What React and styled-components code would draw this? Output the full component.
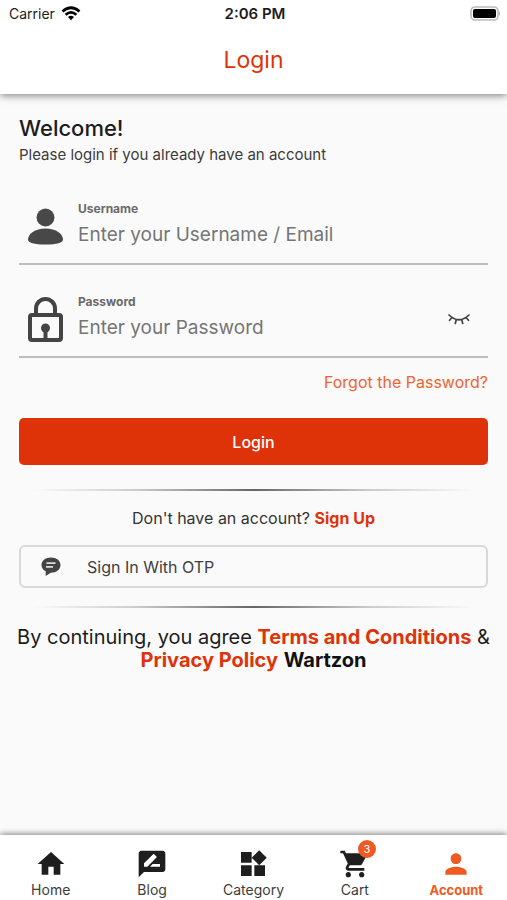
import React, { useState } from "react";
import styled, { createGlobalStyle } from "styled-components";
import {
  MdHome,
  MdRateReview,
  MdWidgets,
  MdShoppingCart,
  MdPerson,
} from "react-icons/md";

const GlobalStyle = createGlobalStyle`
  * {
    margin: 0;
    padding: 0;
    box-sizing: border-box;
  }

  body {
    background-color: #fafafa;
    color: #1c1c1c;
    font-family: Inter, sans-serif;
    font-size: 16px;
  }

  button, input {
    font-family: inherit;
  }
`;

const Page = styled.div`
  min-height: 100vh;
  display: flex;
  flex-direction: column;
`;

const Header = styled.header`
  background: #fff;
  box-shadow: 0 1px 8px rgba(0, 0, 0, 0.55);
`;

const StatusBar = styled.div`
  display: grid;
  grid-template-columns: 1fr auto 1fr;
  align-items: center;
  height: 27px;
  padding: 0 6px 0 9px;
`;

const Carrier = styled.div`
  display: flex;
  align-items: center;
  gap: 6px;
  font-size: 14px;
`;

const Clock = styled.time`
  font-size: 15px;
  font-weight: 600;
`;

const BatteryIcon = styled.svg`
  justify-self: end;
`;

const Title = styled.h1`
  height: 67px;
  line-height: 66px;
  text-align: center;
  font-size: 23px;
  font-weight: 400;
  color: #dd3409;
`;

const Main = styled.main`
  flex: 1;
  padding: 20px 19px;
`;

const Welcome = styled.h2`
  font-size: 22px;
  font-weight: 500;
  line-height: 28px;
`;

const Subtitle = styled.p`
  margin-top: 3px;
  font-size: 15px;
  line-height: 20px;
  color: #3c3c3c;
`;

const LoginForm = styled.form`
  display: flex;
  flex-direction: column;
  margin-top: 36px;
`;

const Field = styled.div`
  display: flex;
  align-items: center;
  gap: 14px;
  padding: 0 18px 12px 8px;
  margin-bottom: ${(props) => (props.$last ? "12px" : "29px")};
  border-bottom: 2px solid #bdbdbd;
`;

const FieldBody = styled.div`
  flex: 1;
  min-width: 0;
`;

const FieldLabel = styled.label`
  display: block;
  font-size: 12px;
  font-weight: 700;
  line-height: 16px;
  color: #696969;
`;

const FieldInput = styled.input`
  display: block;
  width: 100%;
  height: 34px;
  border: none;
  outline: none;
  background: transparent;
  font-size: 19px;
  color: #333;

  &::placeholder {
    color: #757575;
    opacity: 1;
  }
`;

const EyeButton = styled.button`
  display: flex;
  border: none;
  background: none;
  cursor: pointer;
`;

const ForgotLink = styled.a`
  align-self: flex-end;
  font-size: 16px;
  line-height: 24px;
  color: #f0622f;
  text-decoration: none;
`;

const LoginButton = styled.button`
  height: 47px;
  margin-top: 24px;
  border: none;
  border-radius: 5px;
  background: #de3208;
  color: #fff;
  font-size: 16px;
  font-weight: 500;
  cursor: pointer;
`;

const Divider = styled.hr`
  height: 2px;
  margin: ${(props) => (props.$top ? "24px 0 15px" : "18px 0")};
  border: none;
  background: linear-gradient(90deg, transparent 3%, #ccc 25%, #666 50%, #ccc 75%, transparent 97%);
`;

const SignUpText = styled.p`
  text-align: center;
  font-size: 16px;
  line-height: 24px;
  color: #333;
`;

const StrongLink = styled.a`
  color: #dd3409;
  font-weight: 700;
  text-decoration: none;
`;

const OtpButton = styled.button`
  display: flex;
  align-items: center;
  gap: 26px;
  width: 100%;
  height: 43px;
  margin-top: 15px;
  padding: 0 20px;
  border: 2px solid #d8d8d8;
  border-radius: 6px;
  background: transparent;
  color: #404040;
  font-size: 16px;
  cursor: pointer;
`;

const Terms = styled.p`
  margin: 0 -8px;
  text-align: center;
  font-size: 20px;
  line-height: 23px;

  b {
    color: #111;
    font-weight: 700;
  }
`;

const NavBar = styled.nav`
  display: grid;
  grid-template-columns: repeat(5, 1fr);
  height: 65px;
  background: #fff;
  box-shadow: 0 -1px 6px rgba(0, 0, 0, 0.5);
`;

const NavItem = styled.a`
  display: flex;
  flex-direction: column;
  align-items: center;
  padding-top: 13px;
  font-size: ${(props) => (props.$active ? "13px" : "14px")};
  line-height: 20px;
  font-weight: ${(props) => (props.$active ? 700 : 400)};
  color: ${(props) => (props.$active ? "#ee5a22" : "#3c3c3c")};
  text-decoration: none;
`;

const NavIcon = styled.span`
  position: relative;
  display: flex;
  height: 32px;
  font-size: 32px;
  color: ${(props) => (props.$active ? "#ee5a22" : "#1e1e1e")};
`;

const Badge = styled.span`
  position: absolute;
  top: -8px;
  right: -5px;
  width: 18px;
  height: 18px;
  border-radius: 50%;
  background: #ee5a22;
  color: #fff;
  font-size: 11px;
  line-height: 18px;
  text-align: center;
`;

const WifiIcon = () => (
  <svg width="20" height="15" viewBox="0 0 20 15" fill="none" stroke="#000" strokeWidth="2.7">
    <path d="M1.5 5.5Q10-2 18.5 5.5" />
    <path d="M4.6 8.8Q10 4.1 15.4 8.8" />
    <path d="M7 11Q10 8.6 13 11L10 14.2Z" fill="#000" stroke="none" />
  </svg>
);

const UserIcon = () => (
  <svg width="37" height="37" viewBox="0 0 37 37" fill="#484848">
    <circle cx="18.5" cy="9.5" r="9" />
    <path d="M1 31.5C1 26 8 20.5 18.5 20.5S36 26 36 31.5C36 35 30 36.5 18.5 36.5S1 35 1 31.5Z" />
  </svg>
);

const LockIcon = () => (
  <svg width="37" height="46" viewBox="0 0 37 46" fill="none" stroke="#444" strokeWidth="4">
    <path d="M9 18V12.5a9.5 9.5 0 0 1 19 0V18" />
    <rect x="3" y="19" width="31" height="25" rx="2" />
    <circle cx="18.5" cy="32" r="4.5" fill="#444" stroke="none" />
    <path d="M18.5 32V43" />
  </svg>
);

const ClosedEyeIcon = () => (
  <svg width="22" height="13" viewBox="0 0 22 13" fill="none" stroke="#444" strokeWidth="1.7" strokeLinecap="round">
    <path d="M1 2Q11 11.5 21 2M4 4.5L1.5 7.3M8.3 6.5L7.3 10.5M13.7 6.5L14.7 10.5M18 4.5L20.5 7.3" />
  </svg>
);

const MessageIcon = () => (
  <svg width="20" height="20" viewBox="0 0 20 20">
    <path d="M10 .5C4.500 .5 .5 3.500 .5 8c0 3 1.700 5 4.200 6.200V19l5-3.300C15.500 15.700 19.500 12.500 19.500 8S15.500 .5 10 .5Z" fill="#444" />
    <path d="M5.500 6.200H14.500M5 9.800H12" stroke="#ddd" strokeWidth="1.800" />
  </svg>
);

const navItems = [
  { label: "Home", icon: MdHome },
  { label: "Blog", icon: MdRateReview },
  { label: "Category", icon: MdWidgets },
  { label: "Cart", icon: MdShoppingCart, count: 3 },
  { label: "Account", icon: MdPerson, active: true },
];

const App = () => {
  const [username, setUsername] = useState("");
  const [password, setPassword] = useState("");
  const [showPassword, setShowPassword] = useState(false);

  return (
    <>
      <GlobalStyle />
      <Page>
        <Header>
          <StatusBar>
            <Carrier>
              Carrier
              <WifiIcon />
            </Carrier>
            <Clock>2:06 PM</Clock>
            <BatteryIcon width="31" height="15" viewBox="0 0 31 15">
              <rect x="1" y="1" width="27" height="13" rx="4" fill="#fff" stroke="#bbb" strokeWidth="1.6" />
              <rect x="3" y="3" width="23" height="9" rx="2" fill="#000" />
              <path d="M29 5Q31 7.5 29 10Z" fill="#aaa" />
            </BatteryIcon>
          </StatusBar>
          <Title>Login</Title>
        </Header>

        <Main>
          <Welcome>Welcome!</Welcome>
          <Subtitle>Please login if you already have an account</Subtitle>

          <LoginForm onSubmit={(e) => e.preventDefault()}>
            <Field>
              <UserIcon />
              <FieldBody>
                <FieldLabel htmlFor="username">Username</FieldLabel>
                <FieldInput
                  id="username"
                  placeholder="Enter your Username / Email"
                  value={username}
                  onChange={(e) => setUsername(e.target.value)}
                />
              </FieldBody>
            </Field>
            <Field $last>
              <LockIcon />
              <FieldBody>
                <FieldLabel htmlFor="password">Password</FieldLabel>
                <FieldInput
                  id="password"
                  type={showPassword ? "text" : "password"}
                  placeholder="Enter your Password"
                  value={password}
                  onChange={(e) => setPassword(e.target.value)}
                />
              </FieldBody>
              <EyeButton
                type="button"
                aria-label="Show password"
                onClick={() => setShowPassword(!showPassword)}
              >
                <ClosedEyeIcon />
              </EyeButton>
            </Field>
            <ForgotLink href="#forgot">Forgot the Password?</ForgotLink>
            <LoginButton type="submit">Login</LoginButton>
          </LoginForm>

          <Divider $top />
          <SignUpText>
            Don't have an account? <StrongLink href="#signup">Sign Up</StrongLink>
          </SignUpText>
          <OtpButton type="button">
            <MessageIcon />
            Sign In With OTP
          </OtpButton>
          <Divider />
          <Terms>
            By continuing, you agree <StrongLink href="#terms">Terms and Conditions</StrongLink> &{" "}
            <StrongLink href="#privacy">Privacy Policy</StrongLink> <b>Wartzon</b>
          </Terms>
        </Main>

        <NavBar>
          {navItems.map(({ label, icon: Icon, count, active }) => (
            <NavItem key={label} href={`#${label.toLowerCase()}`} $active={active}>
              <NavIcon $active={active}>
                <Icon />
                {count && <Badge>{count}</Badge>}
              </NavIcon>
              {label}
            </NavItem>
          ))}
        </NavBar>
      </Page>
    </>
  );
};

export default App;
